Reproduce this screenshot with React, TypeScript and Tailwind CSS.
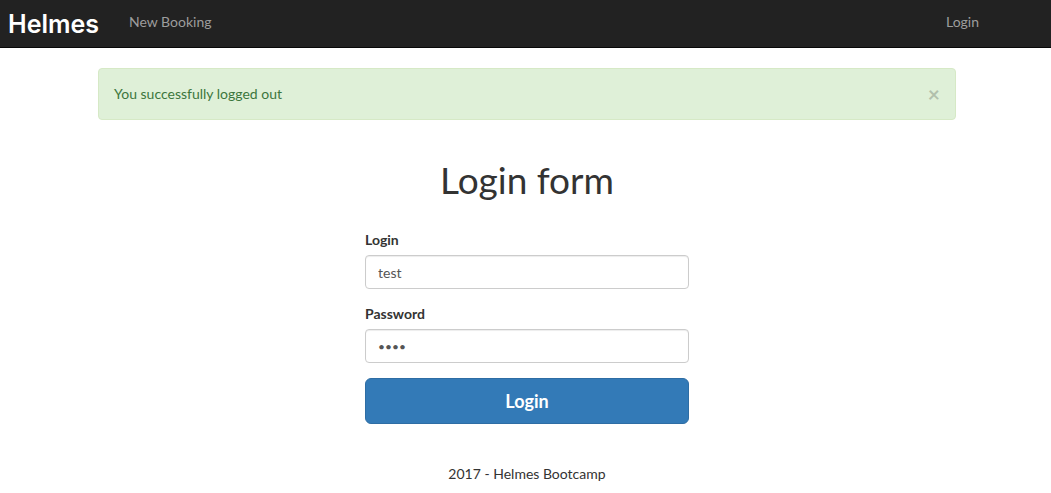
import { useState } from "react";

const inputClass =
  "block h-[34px] w-full rounded border border-[#cccccc] bg-white px-3 text-[#555555] shadow-[inset_0_1px_1px_rgba(0,0,0,0.075)] outline-none focus:border-[#66afe9]";

function Navbar() {
  return (
    <nav className="flex h-12 items-center border-b border-[#080808] bg-[#222222] pr-[72px] pl-2 leading-5 text-[#9d9d9d]">
      <a
        href="#home"
        className="w-[121px] font-['Inter',sans-serif] text-[25px] leading-8 font-semibold text-white"
      >
        Helmes
      </a>
      <a href="#booking" className="pb-1 hover:text-white">
        New Booking
      </a>
      <a href="#login" className="ml-auto pb-1 hover:text-white">
        Login
      </a>
    </nav>
  );
}

function Alert({ onClose }: { onClose: () => void }) {
  return (
    <div
      role="alert"
      className="flex items-center justify-between rounded border border-[#d6e9c6] bg-[#dff0d8] p-[15px] leading-5 text-[#3c763d]"
    >
      <span>You successfully logged out</span>
      <button
        type="button"
        aria-label="Close"
        onClick={onClose}
        className="h-5 cursor-pointer text-[21px] leading-5 font-bold text-black opacity-20 hover:opacity-50"
      >
        ×
      </button>
    </div>
  );
}

export default function App() {
  const [showAlert, setShowAlert] = useState(true);
  const [login, setLogin] = useState("test");
  const [password, setPassword] = useState("test");

  return (
    <div className="min-h-screen bg-white font-['Lato',sans-serif] text-sm leading-5 text-[#333333]">
      <Navbar />
      <main className="pt-5 pr-[95px] pl-[98px]">
        {showAlert && <Alert onClose={() => setShowAlert(false)} />}
        <form
          className="mx-auto max-w-[324px] pt-10"
          onSubmit={(event) => event.preventDefault()}
        >
          <h1 className="mb-[30px] text-center text-[37px] leading-10">Login form</h1>
          <div className="mb-[15px]">
            <label htmlFor="login" className="mb-[5px] block font-bold">
              Login
            </label>
            <input
              id="login"
              type="text"
              value={login}
              onChange={(event) => setLogin(event.target.value)}
              className={`${inputClass} text-sm`}
            />
          </div>
          <div className="mb-[15px]">
            <label htmlFor="password" className="mb-[5px] block font-bold">
              Password
            </label>
            <input
              id="password"
              type="password"
              value={password}
              onChange={(event) => setPassword(event.target.value)}
              className={`${inputClass} text-xs`}
            />
          </div>
          <button
            type="submit"
            className="block h-[46px] w-full cursor-pointer rounded-md border border-[#2e6da4] bg-[#337ab7] text-lg leading-6 font-bold text-white hover:bg-[#286090]"
          >
            Login
          </button>
        </form>
        <footer className="pt-10 text-center">2017 - Helmes Bootcamp</footer>
      </main>
    </div>
  );
}
